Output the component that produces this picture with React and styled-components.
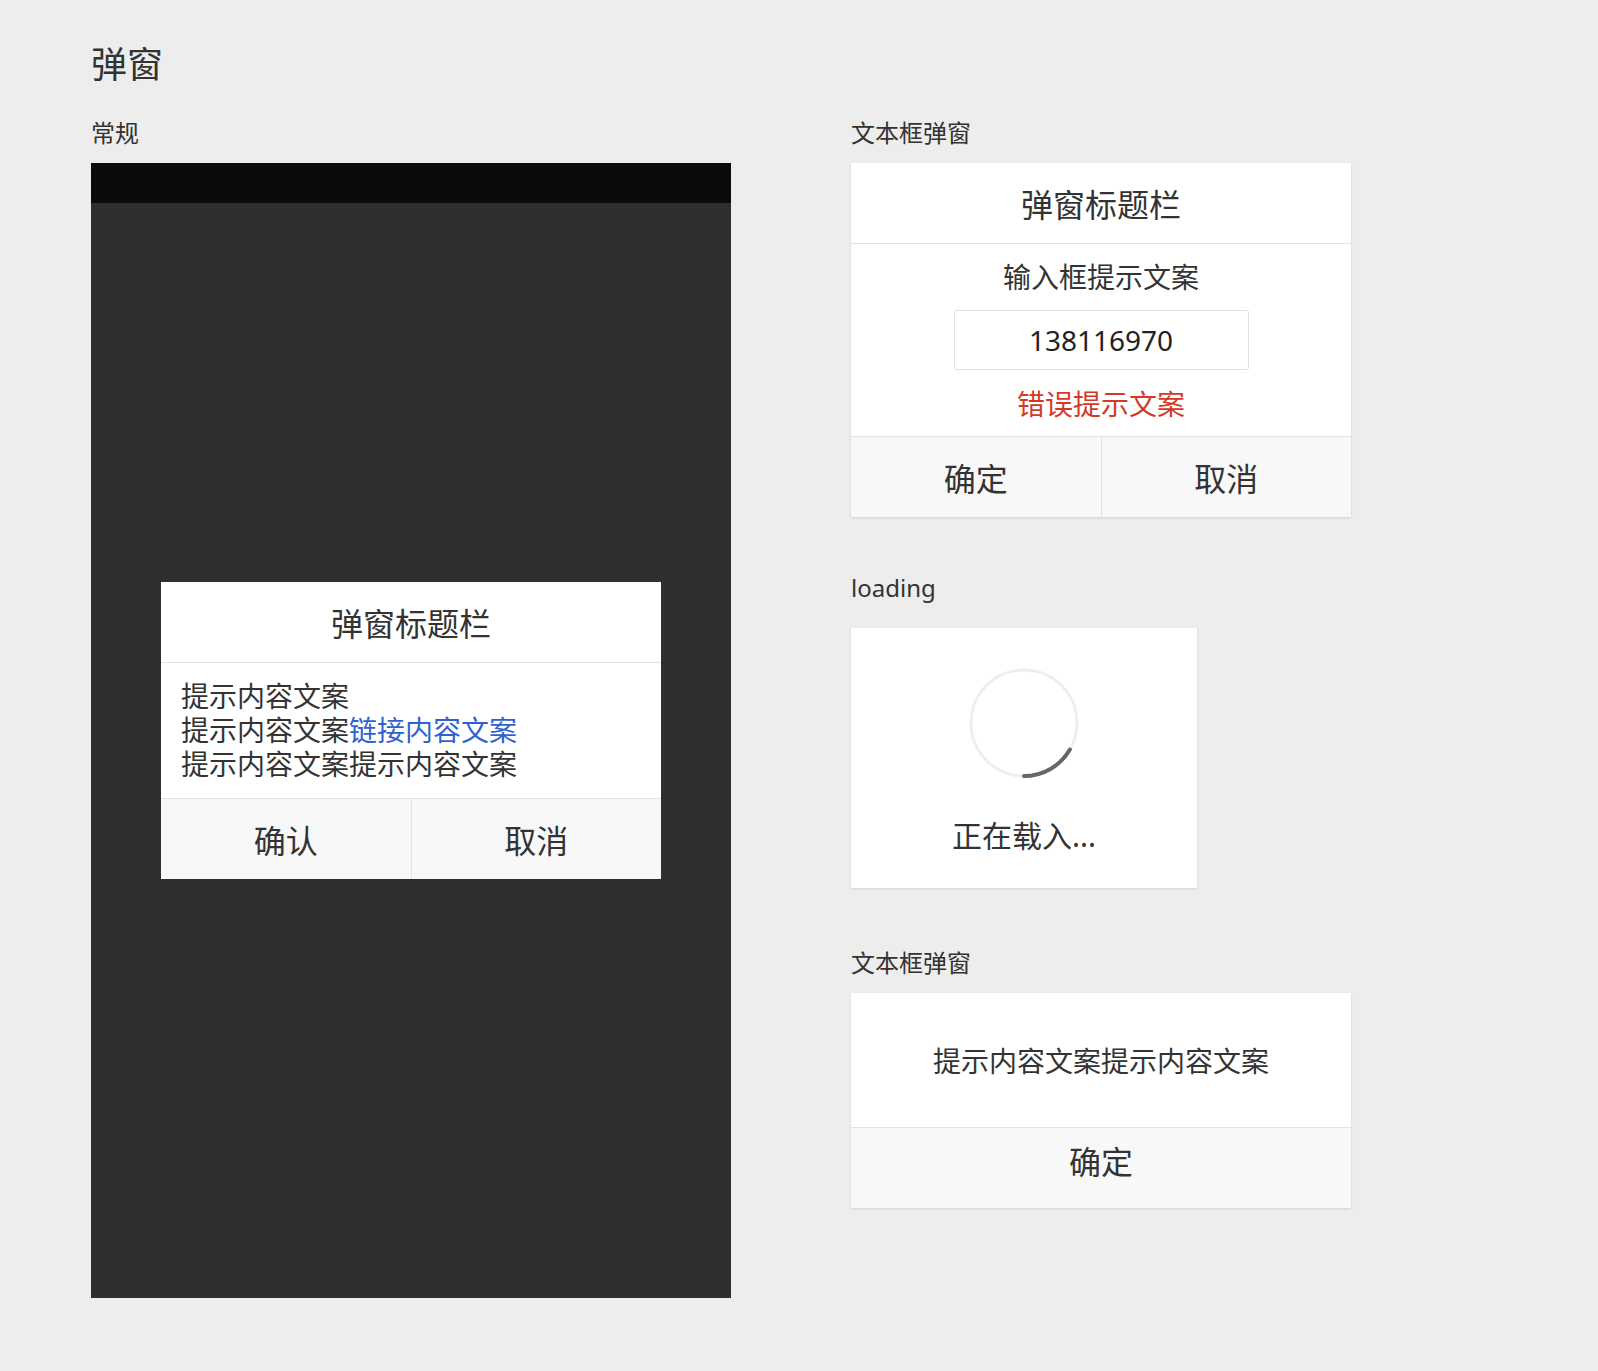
import React from 'react'
import styled, { createGlobalStyle } from 'styled-components'

const GlobalStyle = createGlobalStyle`
  html, body {
    margin: 0;
    padding: 0;
    background: #ededed;
  }
  body {
    font-family: "Noto Sans", "Noto Sans CJK SC", sans-serif;
    color: #333;
  }
`;

export default function App() {
  return (
    <Page>
      <GlobalStyle />
      <Title>弹窗</Title>
      <Columns>
        <LeftColumn>
          <Label>常规</Label>
          <Phone>
            <StatusBar />
            <Screen>
              <Dialog>
                <DialogHead>弹窗标题栏</DialogHead>
                <DialogBody>
                  <p>提示内容文案</p>
                  <p>提示内容文案<Link>链接内容文案</Link></p>
                  <p>提示内容文案提示内容文案</p>
                </DialogBody>
                <Buttons>
                  <Button>确认</Button>
                  <Button>取消</Button>
                </Buttons>
              </Dialog>
            </Screen>
          </Phone>
        </LeftColumn>

        <RightColumn>
          <Section>
            <Label>文本框弹窗</Label>
            <Card>
              <DialogHead>弹窗标题栏</DialogHead>
              <InputBody>
                <Prompt>输入框提示文案</Prompt>
                <Input>138116970</Input>
                <Error>错误提示文案</Error>
              </InputBody>
              <Buttons>
                <Button>确定</Button>
                <Button>取消</Button>
              </Buttons>
            </Card>
          </Section>

          <Section top={59}>
            <Label gap={28}>loading</Label>
            <LoadingCard>
              <Spinner width="112" height="112" viewBox="0 0 112 112">
                <circle cx="56" cy="56" r="53" fill="none" stroke="#efefef" strokeWidth="3" />
                <path d="M101.9 82.5 A53 53 0 0 1 56 109" fill="none" stroke="#666" strokeWidth="4" strokeLinecap="round" />
              </Spinner>
              <LoadingText>正在载入...</LoadingText>
            </LoadingCard>
          </Section>

          <Section top={63}>
            <Label>文本框弹窗</Label>
            <Card>
              <AlertBody>提示内容文案提示内容文案</AlertBody>
              <Buttons lift={16}>
                <Button>确定</Button>
              </Buttons>
            </Card>
          </Section>
        </RightColumn>
      </Columns>
    </Page>
  )
}

const Page = styled.div`
  padding: 47px 0 80px 91px;
`;

const Title = styled.h1`
  margin: 0 0 38px;
  font-size: 36px;
  line-height: 36px;
  font-weight: 400;
  color: #333;
`;

const Columns = styled.div`
  display: flex;
  align-items: flex-start;
  gap: 120px;
`;

const LeftColumn = styled.div`
  width: 640px;
  display: flex;
  flex-direction: column;
`;

const RightColumn = styled.div`
  width: 500px;
  display: flex;
  flex-direction: column;
`;

const Section = styled.div`
  margin-top: ${p => p.top || 0}px;
  display: flex;
  flex-direction: column;
`;

const Label = styled.div`
  font-size: 24px;
  line-height: 24px;
  margin-bottom: ${p => p.gap || 18}px;
  color: #333;
`;

const Phone = styled.div`
  height: 1135px;
  display: flex;
  flex-direction: column;
  background: #2f2f2f;
`;

const StatusBar = styled.div`
  height: 40px;
  background: #0b0b0b;
`;

const Screen = styled.div`
  flex: 1;
  display: flex;
  align-items: center;
  justify-content: center;
  padding-bottom: 40px;
`;

const Dialog = styled.div`
  width: 500px;
  background: #fff;
  display: flex;
  flex-direction: column;
`;

const Card = styled.div`
  background: #fff;
  display: flex;
  flex-direction: column;
  box-shadow: 0 1px 2px rgba(0, 0, 0, 0.12);
`;

const DialogHead = styled.div`
  height: 80px;
  display: flex;
  align-items: center;
  justify-content: center;
  font-size: 32px;
  color: #333;
  border-bottom: 1px solid #e3e3e3;
`;

const DialogBody = styled.div`
  padding: 16px 20px 17px;
  border-bottom: 1px solid #e3e3e3;
  font-size: 28px;
  line-height: 34px;
  color: #333;

  p {
    margin: 0;
  }
`;

const Link = styled.span`
  color: #3062cf;
`;

const InputBody = styled.div`
  padding: 16px 0 15px;
  border-bottom: 1px solid #e3e3e3;
  display: flex;
  flex-direction: column;
  align-items: center;
`;

const Prompt = styled.div`
  font-size: 28px;
  line-height: 34px;
  color: #333;
`;

const Input = styled.div`
  margin-top: 16px;
  width: 293px;
  height: 58px;
  border: 1px solid #e3e3e3;
  border-radius: 2px;
  display: flex;
  align-items: center;
  justify-content: center;
  font-size: 28px;
  color: #222;
`;

const Error = styled.div`
  margin-top: 17px;
  font-size: 28px;
  line-height: 34px;
  color: #d23a27;
`;

const Buttons = styled.div`
  height: 80px;
  box-sizing: border-box;
  padding-bottom: ${p => p.lift || 0}px;
  display: flex;
  background: #f8f8f8;
`;

const Button = styled.div`
  flex: 1;
  display: flex;
  align-items: center;
  justify-content: center;
  font-size: 32px;
  color: #333;

  & + & {
    border-left: 1px solid #e3e3e3;
  }
`;

const LoadingCard = styled.div`
  width: 346px;
  height: 260px;
  background: #fff;
  box-shadow: 0 1px 2px rgba(0, 0, 0, 0.12);
  display: flex;
  flex-direction: column;
  align-items: center;
  padding-top: 39px;
  box-sizing: border-box;
`;

const Spinner = styled.svg`
  display: block;
`;

const LoadingText = styled.div`
  margin-top: 39px;
  font-size: 30px;
  line-height: 36px;
  color: #333;
`;

const AlertBody = styled.div`
  height: 134px;
  display: flex;
  align-items: center;
  justify-content: center;
  font-size: 28px;
  color: #333;
  border-bottom: 1px solid #e3e3e3;
`;
